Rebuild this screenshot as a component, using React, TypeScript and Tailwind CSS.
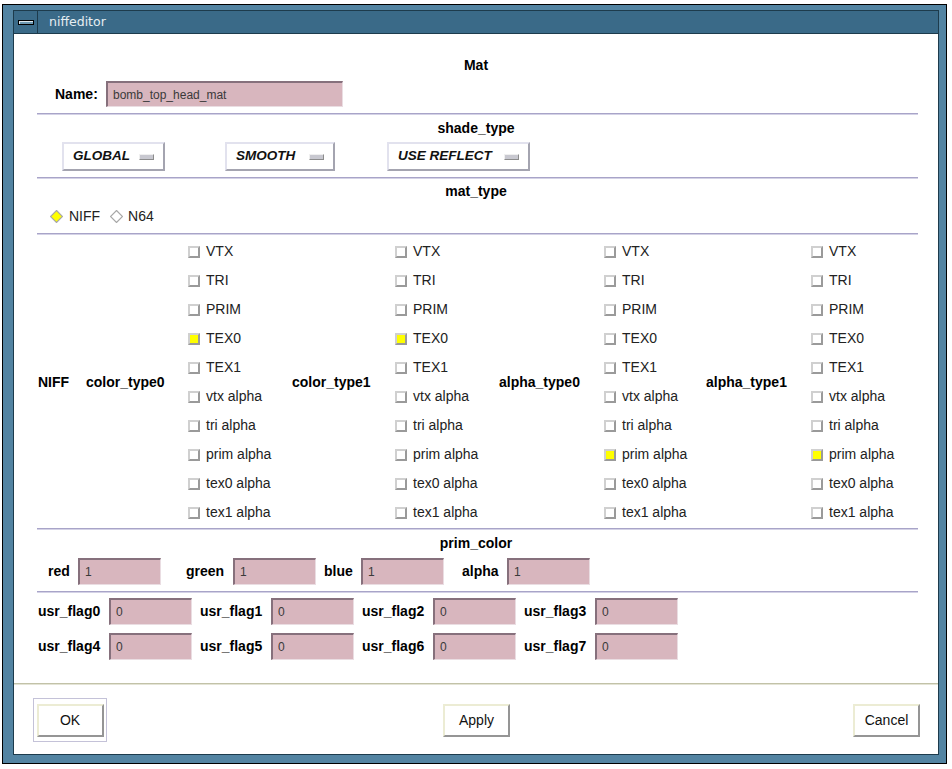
const ROWS = ["VTX", "TRI", "PRIM", "TEX0", "TEX1", "vtx alpha", "tri alpha", "prim alpha", "tex0 alpha", "tex1 alpha"];

function Sep() {
  return <div className="ml-[23px] mr-[20px] h-[2px] border-t border-t-[#a8a4c8] border-b border-b-[#d4d2e6]" />;
}

function Field({ value, w = "w-[83px]", h = "h-[27px]" }: { value: string; w?: string; h?: string }) {
  return (
    <div
      className={`${w} ${h} box-border border-l-2 border-t-2 border-l-[#86707c] border-t-[#86707c] border-r border-b border-r-[#eadde2] border-b-[#eadde2] bg-[#d8b6be] pl-[5px] flex items-center text-[12px] text-[#3a3a3a]`}
    >
      {value}
    </div>
  );
}

function Check({ on, label }: { on: boolean; label: string }) {
  return (
    <div className="h-[29px] flex items-center gap-[6px]">
      <span
        className={`block box-border w-[12px] h-[12px] border-2 border-t-[#d0d0d0] border-l-[#d0d0d0] border-b-[#9a9a9a] border-r-[#9a9a9a] ${on ? "bg-[#ffff00]" : "bg-white"}`}
      />
      <span className="text-[14px] text-[#222]">{label}</span>
    </div>
  );
}

function CheckCol({ checked, w }: { checked: string; w: string }) {
  return (
    <div className={`${w} flex flex-col`}>
      {ROWS.map((r) => (
        <Check key={r} on={r === checked} label={r} />
      ))}
    </div>
  );
}

function OptionMenu({ label, w }: { label: string; w: string }) {
  return (
    <div className={`${w} h-[29px] box-border border-2 border-t-[#e2e2ee] border-l-[#e2e2ee] border-b-[#a4a4b0] border-r-[#a4a4b0] bg-white flex items-center justify-between pl-[9px] pr-[9px]`}>
      <span className="text-[13.5px] font-bold italic text-[#111]">{label}</span>
      <span className="block w-[15px] h-[6px] box-border border border-t-[#f0f0f0] border-l-[#f0f0f0] border-b-[#8c8c8c] border-r-[#8c8c8c] bg-[#c8c8d0]" />
    </div>
  );
}

function Diamond({ on }: { on: boolean }) {
  return (
    <svg width="13" height="13" viewBox="0 0 13 13">
      <polygon points="6.5,0.5 12.5,6.5 6.5,12.5 0.5,6.5" fill={on ? "#ffff00" : "#ffffff"} stroke="#a8a8a8" strokeWidth="1.2" />
    </svg>
  );
}

function PushButton({ label }: { label: string }) {
  return (
    <div className="w-[67px] h-[33px] box-border border-2 border-t-[#ececd4] border-l-[#ececd4] border-b-[#959595] border-r-[#959595] bg-white flex items-center justify-center text-[14px] text-[#111]">
      {label}
    </div>
  );
}

const PRIM = [
  { l: "red", w: "w-[30px]" },
  { l: "green", w: "w-[47px]" },
  { l: "blue", w: "w-[37px]" },
  { l: "alpha", w: "w-[45px]" },
];

export default function App() {
  return (
    <div className="w-[952px] h-[769px] bg-white pl-[2px] pt-[4px] font-['Liberation_Sans',Arial,sans-serif]">
      <div className="w-[945px] h-[760px] box-border border border-black bg-[#5384a2] pl-[10px] pt-[5px] pr-[7px] pb-[8px]">
        <div className="h-full box-border border border-[#1d3b4c] flex flex-col">
          {/* title bar */}
          <div className="h-[23px] shrink-0 bg-[#3a6a88] border-b border-[#1d3b4c] flex items-center">
            <div className="w-[24px] h-full border-r border-[#1d3b4c] flex items-center justify-center">
              <span className="block w-[16px] h-[5px] box-border border border-black bg-[#6f9ab3] shadow-[inset_1px_1px_0_#dfe8ee]" />
            </div>
            <span className="ml-[11px] text-[12.5px] font-['DejaVu_Sans',sans-serif] text-[#e6eef2]">niffeditor</span>
          </div>

          {/* content */}
          <div className="flex-1 bg-white flex flex-col text-black">
            <div className="pt-[23px] h-[39px] text-center text-[14px] font-bold leading-[16px]">Mat</div>

            <div className="mt-[8px] pl-[41px] flex items-center">
              <span className="w-[51px] text-[14px] font-bold">Name:</span>
              <Field value="bomb_top_head_mat" w="w-[237px]" h="h-[26px]" />
            </div>

            <div className="mt-[6px]"><Sep /></div>

            <div className="mt-[5px] text-center text-[14px] font-bold leading-[16px]">shade_type</div>

            <div className="mt-[6px] pl-[48px] flex items-center">
              <OptionMenu label="GLOBAL" w="w-[103px]" />
              <div className="ml-[60px]"><OptionMenu label="SMOOTH" w="w-[110px]" /></div>
              <div className="ml-[52px]"><OptionMenu label="USE REFLECT" w="w-[143px]" /></div>
            </div>

            <div className="mt-[6px]"><Sep /></div>

            <div className="mt-[4px] text-center text-[14px] font-bold leading-[16px]">mat_type</div>

            <div className="mt-[9px] pl-[36px] h-[16px] flex items-center text-[14px] text-[#222]">
              <Diamond on />
              <span className="ml-[6px]">NIFF</span>
              <span className="ml-[10px]"><Diamond on={false} /></span>
              <span className="ml-[5px]">N64</span>
            </div>

            <div className="mt-[9px]"><Sep /></div>

            <div className="mt-[2px] pl-[24px] flex text-[14px]">
              <div className="w-[48px] flex items-center font-bold">NIFF</div>
              <div className="w-[102px] flex items-center font-bold">color_type0</div>
              <CheckCol checked="TEX0" w="w-[104px]" />
              <div className="w-[103px] flex items-center font-bold">color_type1</div>
              <CheckCol checked="TEX0" w="w-[104px]" />
              <div className="w-[105px] flex items-center font-bold">alpha_type0</div>
              <CheckCol checked="prim alpha" w="w-[102px]" />
              <div className="w-[105px] flex items-center font-bold">alpha_type1</div>
              <CheckCol checked="prim alpha" w="w-[100px]" />
            </div>

            <div className="mt-[1px]"><Sep /></div>

            <div className="mt-[5px] text-center text-[14px] font-bold leading-[16px]">prim_color</div>

            <div className="mt-[7px] pl-[34px] flex">
              {PRIM.map(({ l, w }) => (
                <div key={l} className="w-[138px] flex items-center">
                  <span className={`${w} text-[14px] font-bold`}>{l}</span>
                  <Field value="1" />
                </div>
              ))}
            </div>

            <div className="mt-[6px]"><Sep /></div>

            {[0, 4].map((base, i) => (
              <div key={base} className={`${i === 0 ? "mt-[5px]" : "mt-[8px]"} pl-[24px] flex`}>
                {[0, 1, 2, 3].map((k) => (
                  <div key={k} className="w-[162px] flex items-center">
                    <span className="w-[71px] text-[14px] font-bold">usr_flag{base + k}</span>
                    <Field value="0" />
                  </div>
                ))}
              </div>
            ))}

            <div className="mt-[23px] h-[2px] border-t border-t-[#c2c2a8] border-b border-b-[#e4e4d6]" />

            <div className="mt-[13px] pl-[19px] pr-[18px] flex items-center">
              <div className="flex-1 flex">
                <div className="w-[74px] h-[44px] box-border border border-[#c4c2d8] flex items-center justify-center">
                  <PushButton label="OK" />
                </div>
              </div>
              <div className="flex-1 flex justify-center">
                <PushButton label="Apply" />
              </div>
              <div className="flex-1 flex justify-end">
                <PushButton label="Cancel" />
              </div>
            </div>
          </div>
        </div>
      </div>
    </div>
  );
}
